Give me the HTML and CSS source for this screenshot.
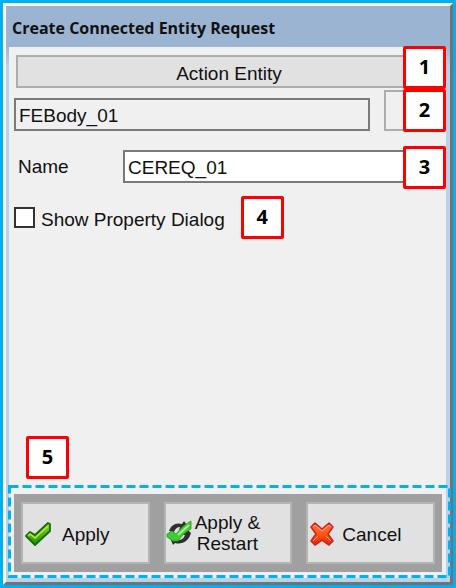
FILE: index.html
```html
<!DOCTYPE html>
<html lang="en">
<head>
  <meta charset="UTF-8">
  <meta name="viewport" content="width=device-width, initial-scale=1.0">
  <title>Create Connected Entity Request</title>
  <link rel="stylesheet" href="styles.css">
</head>
<body>
  <div class="window">
    <h1 class="title">Create Connected Entity Request</h1>
    <form class="content">
      <div class="action-row">
        <button type="button" class="action-button">Action Entity</button>
        <span class="badge">1</span>
      </div>
      <div class="entity-row">
        <input class="text-box entity-box" type="text" value="FEBody_01" aria-label="Action Entity" readonly>
        <button type="button" class="pick-button" aria-label="Pick entity"></button>
        <span class="badge">2</span>
      </div>
      <div class="name-row">
        <label for="name">Name</label>
        <input class="text-box" id="name" type="text" value="CEREQ_01">
        <span class="badge">3</span>
      </div>
      <div class="check-row">
        <input class="check" id="show-dialog" type="checkbox">
        <label for="show-dialog">Show Property Dialog</label>
        <span class="badge badge-inline">4</span>
      </div>
      <span class="badge badge-inline badge-footer">5</span>
      <div class="footer">
        <button type="button" class="footer-button">
          <svg class="icon" viewBox="0 0 26 26">
            <defs>
              <linearGradient id="green" x1="0" y1="0" x2="0" y2="1">
                <stop offset="0" stop-color="#98d41c"/>
                <stop offset="1" stop-color="#0e9410"/>
              </linearGradient>
            </defs>
            <path d="M1 15 L5 11 L10 14 L23 2 L25 3 V10 L10 24 Z" fill="url(#green)" stroke="#146c10" stroke-width="1.8" stroke-linejoin="round"/>
            <path d="M3 15 L5 13 L10 17 L23 5" fill="none" stroke="#c5e838" stroke-width="1.6"/>
          </svg>
          <span>Apply</span>
        </button>
        <button type="button" class="footer-button restart-button">
          <svg class="icon" viewBox="0 0 26 26">
            <path d="M3 11 C5 5 10 2 16 4 L18 1 L23 8 L13 10 L14 7 C11 7 9 9 8 12 Z" fill="#2e302e"/>
            <path d="M25 13 C23 21 16 25 9 23 L7 25 L4 18 L14 17 L12 20 C16 20 18 18 19 15 L16 15 L22 10 Z" fill="#2e302e"/>
            <path d="M1 14 L6 11 L10 14 C14 9 18 5 25 1 L25 9 C19 12 16 16 12 21 L7 21 L1 17 Z" fill="#3fcb34" stroke="#259a22" stroke-width="0.8"/>
            <path d="M12 15 L23 5" stroke="#a7ee92" stroke-width="2"/>
          </svg>
          <span>Apply &amp;<br>Restart</span>
        </button>
        <button type="button" class="footer-button cancel-button">
          <svg class="icon" viewBox="0 0 26 26">
            <defs>
              <linearGradient id="red" x1="0" y1="0" x2="0" y2="1">
                <stop offset="0" stop-color="#ff7048"/>
                <stop offset="0.5" stop-color="#ff5a10"/>
                <stop offset="1" stop-color="#f81c08"/>
              </linearGradient>
            </defs>
            <path d="M6 2 L13 8 L20 2 L24 6 L19 13 L24 20 L20 24 L13 19 L6 24 L2 20 L7 13 L2 6 Z" fill="url(#red)" stroke="#cc2420" stroke-width="1.6" stroke-linejoin="round"/>
            <path d="M4 6 L6 4 L13 10 L20 4 L22 6 M4 20 L9 15 M22 20 L17 15" fill="none" stroke="#ffa890" stroke-width="1"/>
          </svg>
          <span>Cancel</span>
        </button>
        <svg class="outline"><rect x="1.5" y="1.5"/></svg>
      </div>
    </form>
  </div>
</body>
</html>
```

FILE: styles.css
```css
* {
  box-sizing: border-box;
}
body {
  margin: 0;
  padding: 3px;
  min-height: 100vh;
  display: flex;
  background-color: #00b0f0;
  font-family: "Liberation Sans", Arial, sans-serif;
  font-size: 19px;
  color: #111;
}
.window {
  flex: 1;
  display: flex;
  flex-direction: column;
  padding: 0 4px 4px 3px;
  border: 3px solid #fff;
  border-right-color: #737373;
  border-bottom-color: #737373;
  background: linear-gradient(#9bb4d1, #9bb4d1 40px, #b9d1ea 60px);
}
.title {
  margin: 0;
  padding: 2px 3px 0;
  height: 41px;
  line-height: 40px;
  font-family: "Open Sans", "Noto Sans", sans-serif;
  font-size: 16px;
  font-weight: 700;
}
.content {
  flex: 1;
  display: flex;
  flex-direction: column;
  padding: 8px 4px 6px 5px;
  background-color: #f0f0f0;
}
button,
input {
  margin: 0;
  font-family: inherit;
  font-size: inherit;
  color: inherit;
}
button {
  border: 2px solid #adadad;
  border-radius: 0;
  background-color: #e1e1e1;
}
.action-row,
.entity-row,
.name-row,
.check-row {
  position: relative;
  display: flex;
  align-items: center;
}
.action-row {
  padding-left: 2px;
}
.action-button {
  flex: 1;
  height: 33px;
  padding: 4px 0 0;
  line-height: 24px;
}
.entity-row {
  margin-top: 2px;
  gap: 14px;
  align-items: flex-end;
}
.text-box {
  flex: 1;
  min-width: 0;
  height: 33px;
  padding: 3px 3px 0;
  border: 2px solid #7a7a7a;
  border-radius: 0;
  background-color: #fff;
}
.entity-box {
  background-color: #f0f0f0;
}
.pick-button {
  width: 58px;
  height: 41px;
  background-color: #f0f0f0;
}
.name-row {
  margin-top: 19px;
  padding: 0 0 5px 4px;
}
.name-row label {
  width: 105px;
}
.check-row {
  margin-top: 8px;
  gap: 6px;
}
.check-row label {
  padding-top: 4px;
}
.check {
  appearance: none;
  width: 21px;
  height: 21px;
  border: 2px solid #333;
  background-color: #fff;
}
.check:checked {
  background-color: #00b0f0;
}

/* numbered callouts */
.badge {
  position: absolute;
  bottom: -1px;
  right: -4px;
  width: 43px;
  height: 43px;
  border: 3px solid #f00;
  border-radius: 2px;
  background-color: #fff;
  color: #000;
  font-family: "Noto Sans", sans-serif;
  font-size: 20px;
  font-weight: 700;
  line-height: 36px;
  text-align: center;
}
.badge-inline {
  position: static;
  margin-left: 10px;
}
.badge-footer {
  margin: auto 0 15px 12px;
}

.footer {
  position: relative;
  display: grid;
  grid-template-columns: 1fr 1fr 1fr;
  gap: 14px;
  padding: 8px 7px;
  background-color: #a0a0a0;
}
.footer-button {
  display: flex;
  align-items: center;
  gap: 11px;
  height: 62px;
  padding: 2px 0 0 2px;
  border-color: #b4b4b4;
  line-height: 21px;
}
.restart-button {
  gap: 3px;
  padding: 0;
}
.cancel-button {
  gap: 7px;
  padding-left: 1px;
}
.icon {
  flex: none;
  width: 26px;
  height: 26px;
}
.outline {
  position: absolute;
  top: -9px;
  left: -6px;
  width: calc(100% + 15px);
  height: calc(100% + 15px);
  pointer-events: none;
}
.outline rect {
  width: calc(100% - 3px);
  height: calc(100% - 3px);
  fill: none;
  stroke: #00b0f0;
  stroke-width: 3;
  stroke-dasharray: 9 4;
}
```
